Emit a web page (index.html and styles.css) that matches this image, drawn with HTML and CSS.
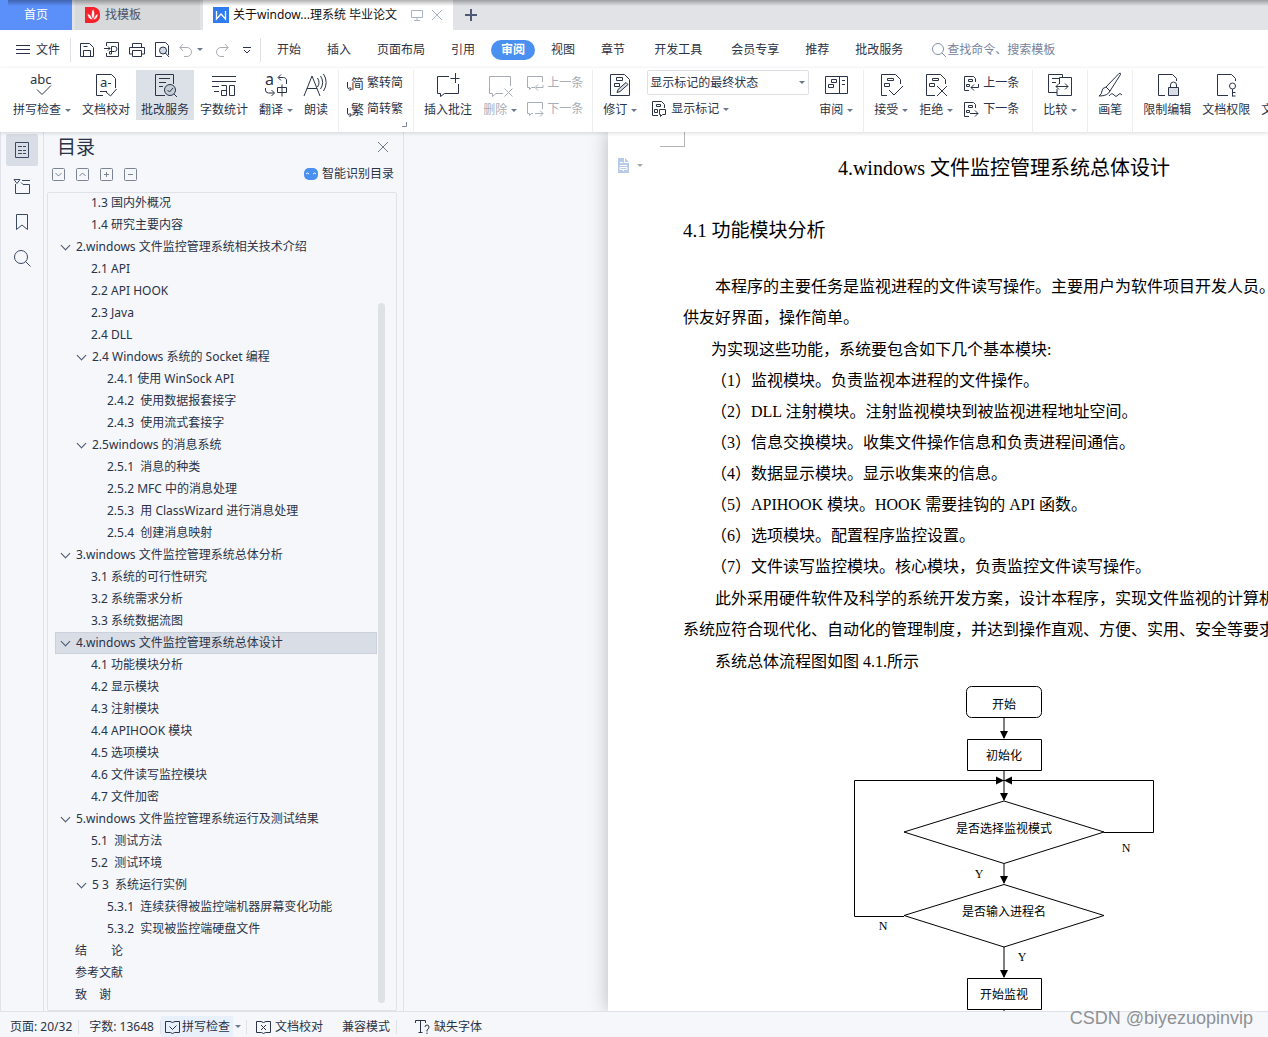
FILE: index.html
```html
<!DOCTYPE html>
<html lang="zh-CN">
<head>
<meta charset="utf-8">
<title>关于windows文件监控管理系统 毕业论文</title>
<link rel="stylesheet" href="styles.css">
</head>
<body>
<div class="app">
  <header class="tabs">
    <button class="tab tab-home">首页</button>
    <button class="tab tab-template">
      <svg class="logo" width="16" height="16" viewBox="0 0 16 16"><path d="M0 0h9a7 7 0 0 1 6 8a7 7 0 0 1-7 8H0z" fill="#f5222d"/><path d="M8 2c2 3 2 6 0 11c-2-4-2-8 0-11zM7.500 13C4 12 2.500 10 2.500 6.500C5 7.500 7 9.500 7.500 13zM8.500 13c.5-3.500 2-5 4.500-6c0 3-1.500 5-4.500 6z" fill="#fff" stroke="#f5222d" stroke-width=".5"/></svg>
      找模板
    </button>
    <div class="tab tab-doc">
      <svg class="logo" width="16" height="16" viewBox="0 0 16 16"><path d="M0 0h16v16H0z" fill="#2f7bf0"/><path d="M3.500 4v8l4.500-5l4.500 5V4" fill="none" stroke="#fff" stroke-width="1.300"/></svg>
      <span class="tab-title">关于window...理系统 毕业论文</span>
      <svg class="muted" width="12" height="12" viewBox="0 0 12 12"><path d="M.5 1.500h11v7H.5zM6 8.500v3M3 11.500h6"/></svg>
      <button class="icon-button muted" aria-label="关闭标签"><svg width="12" height="12" viewBox="0 0 12 12"><path d="M1 1l10 10M11 1L1 11"/></svg></button>
    </div>
    <button class="tab-add" aria-label="新建标签"><svg width="12" height="12" viewBox="0 0 12 12"><path d="M6 0v12M0 6h12" stroke-width="2"/></svg></button>
  </header>

  <nav class="menu">
    <button class="file-menu"><svg width="14" height="12" viewBox="0 0 14 12"><path d="M0 1.500h14M0 5.500h14M0 9.500h14"/></svg>文件</button>
    <span class="menu-rule"></span>
    <div class="quick">
      <button class="icon-button" aria-label="保存"><svg width="16" height="16" viewBox="0 0 16 16"><path d="M1.500 14.500v-13h9l4 4v9zM4.500 14.500v-6h7v6M4.500 4.500h4"/></svg></button>
      <button class="icon-button" aria-label="输出PDF"><svg width="16" height="16" viewBox="0 0 16 16"><path d="M2.500 4V.5h12v14h-12V11M0 6.500h6M4 4.500l2 2l-2 2M7.500 12V4.500h3a2 2 0 0 1 0 5H5.500v2.500h2"/></svg></button>
      <button class="icon-button" aria-label="打印"><svg width="16" height="16" viewBox="0 0 16 16"><path d="M3.500 5V1.500h9V5M3.500 12h-3V5.500h15V12h-3M3.500 8.500h9v6h-9z"/></svg></button>
      <button class="icon-button" aria-label="打印预览"><svg width="16" height="16" viewBox="0 0 16 16"><path d="M8 14.500H1.500V.5h10l3 3V13"/><circle cx="9" cy="8.500" r="3.500" fill="#d5dae2"/><path d="M11.500 11l3.500 4"/></svg></button>
      <button class="icon-button faded undo" aria-label="撤销"><svg width="14" height="14" viewBox="0 0 14 14"><path d="M4 1L1 4.500L4 8M1 4.500h7a4 4 0 0 1 0 9H5"/></svg><i class="caret"></i></button>
      <button class="icon-button faded redo" aria-label="恢复"><svg width="14" height="14" viewBox="0 0 14 14"><path d="M10 1l3 3.500L10 8M13 4.500H6a4 4 0 0 0 0 9h3"/></svg></button>
      <button class="icon-button more" aria-label="更多"><svg width="8" height="8" viewBox="0 0 8 8"><path d="M0 1.500h8M1 4l3 3l3-3"/></svg></button>
    </div>
    <span class="menu-rule"></span>
    <div class="menu-items">
      <button>开始</button><button>插入</button><button>页面布局</button><button>引用</button><button class="current">审阅</button><button>视图</button><button>章节</button><button class="wide">开发工具</button><button>会员专享</button><button>推荐</button><button>批改服务</button>
    </div>
    <label class="search"><svg width="16" height="16" viewBox="0 0 16 16"><circle cx="7" cy="7" r="5.500"/><path d="M11 11l4 4"/></svg><input type="text" placeholder="查找命令、搜索模板" aria-label="查找命令"></label>
  </nav>

  <div class="ribbon">
    <button class="tool"><svg width="24" height="26" viewBox="0 0 24 26"><text x="0" y="12" class="glyph-abc">abc</text><path d="M7 17.500l5 5l9-9"/></svg><span>拼写检查<i class="caret"></i></span></button>
    <button class="tool"><svg width="24" height="26" viewBox="0 0 24 26"><path d="M9 23.500H2.500v-21h15l4 4V16M6 19.500h7M12 20l4.500 4l6-7M14 11.500h3"/><text x="6" y="15" class="glyph-a">a</text></svg><span>文档校对</span></button>
    <button class="tool active"><svg width="24" height="26" viewBox="0 0 24 26"><path d="M12 23.500H2.500v-21h18V12M6 6.500h11M6 10.500h7M6 14.500h4"/><circle cx="17" cy="18" r="5.500" fill="#c6cdd5"/><path d="M14.500 18l2 2l3.500-4M21 22l3 3"/></svg><span>批改服务</span></button>
    <button class="tool"><svg width="24" height="26" viewBox="0 0 24 26"><path d="M0 4.500h24M0 9.500h24M0 14.500h7M2 19.500h5M9.500 13.500h5v10h-5v-5h5M17.500 13.500h5v10h-5z"/></svg><span>字数统计</span></button>
    <button class="tool"><svg width="24" height="26" viewBox="0 0 24 26"><text x="1" y="13" class="glyph-big">a</text><path d="M22.500 12V9a3 3 0 0 0-3-3.500h-5M17 2.500l-3 3l3 3M1.500 16v2a3 3 0 0 0 3 3H10M7.500 18l3 3l-3 3M13.500 15.500h9v5h-9zM18 12.500v12"/></svg><span>翻译<i class="caret"></i></span></button>
    <button class="tool"><svg width="24" height="26" viewBox="0 0 24 26"><path d="M0 24L8 4l8 20M3 16.500h10M13.500 6a8 8 0 0 1 0 9M16.500 4a11 11 0 0 1 0 13M19.500 2a15 15 0 0 1 0 17"/></svg><span>朗读</span></button>
    <span class="rule"></span>
    <div class="stack convert">
      <button><svg width="16" height="18" viewBox="0 0 16 18"><text x="4" y="14" class="glyph-cjk">简</text><path d="M.5 8v5a2 2 0 0 0 2 2H4M2.500 13l2 2l-2 2"/></svg>繁转简</button>
      <button><svg width="16" height="18" viewBox="0 0 16 18"><text x="4" y="14" class="glyph-cjk">繁</text><path d="M.5 8v5a2 2 0 0 0 2 2H4M2.500 13l2 2l-2 2"/></svg>简转繁</button>
      <svg class="launcher" width="6" height="6" viewBox="0 0 6 6"><path d="M4.500 0v4.500H0"/></svg>
    </div>
    <span class="rule"></span>
    <button class="tool"><svg width="24" height="26" viewBox="0 0 24 26"><path d="M13 4.500H1.500v17h3v3l4-3h14V12M19.500 1v10M14.500 6.500h9"/></svg><span>插入批注</span></button>
    <button class="tool faded"><svg width="24" height="26" viewBox="0 0 24 26"><path d="M15 21.500H8l-3.500 3v-3h-3v-17h21V14M16.500 16.500l8 8M24.500 16.500l-8 8"/></svg><span>删除<i class="caret"></i></span></button>
    <div class="stack comments faded">
      <button><svg width="16" height="18" viewBox="0 0 16 18"><path d="M8 13.500H4.500l-2 2v-2h-2v-11h15V8M16 11v2.500H9M11 10.500l-3 3l3 3"/></svg>上一条</button>
      <button><svg width="16" height="18" viewBox="0 0 16 18"><path d="M6 13.500H4.500l-2 2v-2h-2v-11h15V9M8 13.500h8M13 10.500l3 3l-3 3"/></svg>下一条</button>
    </div>
    <span class="rule"></span>
    <button class="tool"><svg width="24" height="26" viewBox="0 0 24 26"><path d="M2.500 23.500v-21h14l5 5v16zM8.500 5.500h6v3h-6zM6.500 11.500h5v3h-5z"/><path d="M9 20.500l1-3l8-7l2 2l-8 7z" fill="#d9dde4"/></svg><span>修订<i class="caret"></i></span></button>
    <div class="stack markup">
      <div class="select-box"><select aria-label="显示状态"><option>显示标记的最终状态</option></select><i class="caret"></i></div>
      <button class="markup-show"><svg width="16" height="18" viewBox="0 0 16 18"><path d="M7 15.500H1.500v-14h9l3 3V8M5.500 4.500h4v2h-4zM3.500 9.500h3v3h-3zM8.500 9.500h6v5h-3l-2 2v-2h-1z"/></svg>显示标记<i class="caret"></i></button>
    </div>
    <button class="tool"><svg width="24" height="26" viewBox="0 0 24 26"><path d="M1.500 4.500h22v17h-22zM15.500 4.500v17M7.500 7.500h5v3h-5zM4.500 12.500h5v3h-5zM18 8.500h3M18 12.500h3"/></svg><span>审阅<i class="caret"></i></span></button>
    <span class="rule"></span>
    <button class="tool"><svg width="24" height="26" viewBox="0 0 24 26"><path d="M8 23.500H2.500v-21h14l5 5V12M8.500 6.500h6v2h-6zM5.500 11.500h5v3h-5zM10 18l5 5l9-9"/></svg><span>接受<i class="caret"></i></span></button>
    <button class="tool"><svg width="24" height="26" viewBox="0 0 24 26"><path d="M11 23.500H2.500v-21h14l5 5V12M8.500 6.500h6v2h-6zM5.500 11.500h5v3h-5zM13 14l10 10M23 14L13 24"/></svg><span>拒绝<i class="caret"></i></span></button>
    <div class="stack changes">
      <button><svg width="16" height="18" viewBox="0 0 16 18"><path d="M6 16.500H1.500v-14h9l2 2V8M5.500 5.500h4v2h-4zM3.500 10.500h3v2h-3zM15.500 10v3.500H8M11 10.500l-3 3l3 3"/></svg>上一条</button>
      <button><svg width="16" height="18" viewBox="0 0 16 18"><path d="M6 16.500H1.500v-14h9l2 2V8M5.500 5.500h4v2h-4zM3.500 10.500h3v2h-3zM7 13.500h8M12 10.500l3 3l-3 3"/></svg>下一条</button>
    </div>
    <span class="rule"></span>
    <button class="tool"><svg width="24" height="26" viewBox="0 0 24 26"><path d="M9 20.500H.5v-18h14V5M9 17v6.500h14.500v-18H11.500V12M4 6.500h7M4 10.500h4M8 14.500h12M11 11.500l-3 3l3 3M17 11.500l3 3l-3 3"/></svg><span>比较<i class="caret"></i></span></button>
    <span class="rule"></span>
    <button class="tool"><svg width="24" height="26" viewBox="0 0 24 26"><path d="M8 15L21 1.500q2-1 1.500 1L12 19M8 15l4 4q-2 5-11 5q3-2 3-5t4-4M11 24q3-4 5-1t4 0t4 0"/></svg><span>画笔</span></button>
    <span class="rule"></span>
    <button class="tool"><svg width="24" height="26" viewBox="0 0 24 26"><path d="M10 23.500H3.500v-21h14l4 4V9"/><path d="M13.500 15.500h10v8h-10z" fill="#d9dde4"/><path d="M15.500 15v-2a3 3 0 0 1 6 0v2"/></svg><span>限制编辑</span></button>
    <button class="tool"><svg width="24" height="26" viewBox="0 0 24 26"><path d="M14 23.500H3.500v-21h14l4 4V9"/><circle cx="18.500" cy="14" r="3"/><path d="M18.500 17v7.500M18.500 20.500h3M18.500 24h3"/></svg><span>文档权限</span></button>
    <button class="tool"><svg width="24" height="26" viewBox="0 0 24 26"></svg><span>文档认证</span></button>
  </div>

  <main class="workspace">
    <nav class="rail">
      <button class="active" aria-label="目录"><svg width="16" height="18" viewBox="0 0 16 18"><path d="M1.500 1.500h13v15h-13zM4 5.500h4M9 5.500h3M4 9.500h4M9 9.500h3M4 12.500h4M9 12.500h3"/></svg></button>
      <button aria-label="章节"><svg width="16" height="18" viewBox="0 0 16 18"><path d="M0 2.500h6L3 6.500zM8 3.500h8M1.500 7v9.500h14v-9H9l-2 -2"/></svg></button>
      <button aria-label="书签"><svg width="16" height="18" viewBox="0 0 16 18"><path d="M2.500 1.500h11v15L8 12l-5.500 4.500z"/></svg></button>
      <button aria-label="查找"><svg width="16" height="18" viewBox="0 0 16 18"><circle cx="7" cy="8" r="6.500"/><path d="M11.500 12.500l5 5"/></svg></button>
    </nav>

    <aside class="outline">
      <div class="outline-head"><h2>目录</h2><button class="icon-button" aria-label="关闭目录"><svg width="10" height="10" viewBox="0 0 10 10"><path d="M0 0l10 10M10 0L0 10"/></svg></button></div>
      <div class="outline-tools">
        <button class="icon-button" aria-label="展开"><svg width="13" height="13" viewBox="0 0 13 13"><rect x=".5" y=".5" width="12" height="12" rx="1"/><path d="M3.500 5l3 3l3-3"/></svg></button>
        <button class="icon-button" aria-label="收起"><svg width="13" height="13" viewBox="0 0 13 13"><rect x=".5" y=".5" width="12" height="12" rx="1"/><path d="M3.500 8l3-3l3 3"/></svg></button>
        <button class="icon-button" aria-label="增加"><svg width="13" height="13" viewBox="0 0 13 13"><rect x=".5" y=".5" width="12" height="12" rx="1"/><path d="M4 6.500h5M6.500 4v5"/></svg></button>
        <button class="icon-button" aria-label="减少"><svg width="13" height="13" viewBox="0 0 13 13"><rect x=".5" y=".5" width="12" height="12" rx="1"/><path d="M4 6.500h5"/></svg></button>
        <button class="smart"><svg class="logo" width="14" height="12" viewBox="0 0 14 12"><rect width="14" height="12" rx="5" fill="#4a90f0"/><path d="M2 6q1.500-2 3 0M9 6q1.500-2 3 0" stroke="#fff"/></svg>智能识别目录</button>
      </div>
      <div class="tree">
        <ul>
          <li class="l2"><a href="#">1.3 国内外概况</a></li>
          <li class="l2"><a href="#">1.4 研究主要内容</a></li>
          <li class="open"><a href="#">2.windows 文件监控管理系统相关技术介绍</a></li>
          <li class="l2"><a href="#">2.1 API</a></li>
          <li class="l2"><a href="#">2.2 API HOOK</a></li>
          <li class="l2"><a href="#">2.3 Java</a></li>
          <li class="l2"><a href="#">2.4 DLL</a></li>
          <li class="l2 open"><a href="#">2.4 Windows 系统的 Socket 编程</a></li>
          <li class="l3"><a href="#">2.4.1 使用 WinSock API</a></li>
          <li class="l3"><a href="#">2.4.2&nbsp; 使用数据报套接字</a></li>
          <li class="l3"><a href="#">2.4.3&nbsp; 使用流式套接字</a></li>
          <li class="l2 open"><a href="#">2.5windows 的消息系统</a></li>
          <li class="l3"><a href="#">2.5.1&nbsp; 消息的种类</a></li>
          <li class="l3"><a href="#">2.5.2 MFC 中的消息处理</a></li>
          <li class="l3"><a href="#">2.5.3&nbsp; 用 ClassWizard 进行消息处理</a></li>
          <li class="l3"><a href="#">2.5.4&nbsp; 创建消息映射</a></li>
          <li class="open"><a href="#">3.windows 文件监控管理系统总体分析</a></li>
          <li class="l2"><a href="#">3.1 系统的可行性研究</a></li>
          <li class="l2"><a href="#">3.2 系统需求分析</a></li>
          <li class="l2"><a href="#">3.3 系统数据流图</a></li>
          <li class="open selected"><a href="#">4.windows 文件监控管理系统总体设计</a></li>
          <li class="l2"><a href="#">4.1 功能模块分析</a></li>
          <li class="l2"><a href="#">4.2 显示模块</a></li>
          <li class="l2"><a href="#">4.3 注射模块</a></li>
          <li class="l2"><a href="#">4.4 APIHOOK 模块</a></li>
          <li class="l2"><a href="#">4.5 选项模块</a></li>
          <li class="l2"><a href="#">4.6 文件读写监控模块</a></li>
          <li class="l2"><a href="#">4.7 文件加密</a></li>
          <li class="open"><a href="#">5.windows 文件监控管理系统运行及测试结果</a></li>
          <li class="l2"><a href="#">5.1&nbsp; 测试方法</a></li>
          <li class="l2"><a href="#">5.2&nbsp; 测试环境</a></li>
          <li class="l2 open"><a href="#">5 3&nbsp; 系统运行实例</a></li>
          <li class="l3"><a href="#">5.3.1&nbsp; 连续获得被监控端机器屏幕变化功能</a></li>
          <li class="l3"><a href="#">5.3.2&nbsp; 实现被监控端硬盘文件</a></li>
          <li><a href="#">结　　论</a></li>
          <li><a href="#">参考文献</a></li>
          <li><a href="#">致　谢</a></li>
        </ul>
        <div class="scroll-track"><div class="scroll-thumb"></div></div>
      </div>
    </aside>

    <section class="canvas">
      <article class="page">
        <span class="crop-mark"></span>
        <button class="para-mark" aria-label="段落"><svg width="11" height="15" viewBox="0 0 11 15"><path d="M0 0h7l4 4v11H0z" fill="#b8cbea" stroke="none"/><path d="M6.500 0v4.500H11M2 4.500h3M2 7.500h7M2 9.500h7v2H2zM5.500 11v2" stroke="#fff"/></svg><i class="caret"></i></button>
        <h1>4.windows 文件监控管理系统总体设计</h1>
        <h2>4.1 功能模块分析</h2>
        <p class="gap-after">本程序的主要任务是监视进程的文件读写操作。主要用户为软件项目开发人员。<br>供友好界面，操作简单。</p>
        <p class="lead">为实现这些功能，系统要包含如下几个基本模块:</p>
        <ul class="modules">
          <li>（1）监视模块。负责监视本进程的文件操作。</li>
          <li>（2）DLL 注射模块。注射监视模块到被监视进程地址空间。</li>
          <li>（3）信息交换模块。收集文件操作信息和负责进程间通信。</li>
          <li>（4）数据显示模块。显示收集来的信息。</li>
          <li>（5）APIHOOK 模块。HOOK 需要挂钩的 API 函数。</li>
          <li>（6）选项模块。配置程序监控设置。</li>
          <li>（7）文件读写监控模块。核心模块，负责监控文件读写操作。</li>
        </ul>
        <p class="gap-after">此外采用硬件软件及科学的系统开发方案，设计本程序，实现文件监视的计算机<br>系统应符合现代化、自动化的管理制度，并达到操作直观、方便、实用、安全等要求</p>
        <p>系统总体流程图如图 4.1.所示</p>
        <svg class="flowchart" width="308" height="334" viewBox="0 0 308 334">
          <g class="lines">
            <rect x="116.500" y="9.500" width="75" height="31" rx="5"/>
            <path d="M117.500 62.500h74v31h-74zM117.500 301.500h74v31h-74z"/>
            <path d="M154 124l100 31l-100 31.500l-100-31.500zM154 207.500l100 31l-100 31.500l-100-31.500z"/>
            <path d="M154 41v20M154 94v29M154 187v19M154 270v30M154 333v2"/>
            <path d="M254 155.500h49.500v-52H4.500v136H54"/>
          </g>
          <path d="M150 54h8l-4 8zM150 116h8l-4 8zM150 199h8l-4 8zM150 293h8l-4 8zM146 99.500v8l8-4zM162 99.500v8l-8-4z"/>
          <g class="labels">
            <text x="154" y="32">开始</text><text x="154" y="83">初始化</text><text x="154" y="156">是否选择监视模式</text><text x="154" y="239">是否输入进程名</text><text x="154" y="322">开始监视</text>
            <text x="276" y="175">N</text><text x="129" y="201">Y</text><text x="33" y="253">N</text><text x="172" y="284">Y</text>
          </g>
        </svg>
      </article>
    </section>
  </main>

  <footer class="status">
    <span class="cell">页面: 20/32</span>
    <span class="cell">字数: 13648</span>
    <button class="spell"><svg width="15" height="14" viewBox="0 0 15 14"><path d="M5 1.500H.5v11h5l2 1l2-1h5v-11H10l-2.500 1zM4.500 6.500l3 3l4-4"/></svg>拼写检查</button>
    <button class="spell-more" aria-label="拼写选项"><i class="caret"></i></button>
    <button class="proof"><svg width="15" height="14" viewBox="0 0 15 14"><path d="M5 1.500H.5v11h5l2 1l2-1h5v-11H10l-2.500 1zM5 5l5 5M10 5l-5 5"/></svg>文档校对</button>
    <span class="cell compat">兼容模式</span>
    <button class="missing"><svg width="15" height="14" viewBox="0 0 15 14"><path d="M.5 3V.5h10V3M5.500 .5v12M3.500 12.500h4M10 7q0-2 2-2t2 2t-2 3v1.500M12 12.500v1.500"/></svg>缺失字体</button>
  </footer>
  <div class="watermark">CSDN @biyezuopinvip</div>
</div>
</body>
</html>
```
FILE: styles.css
```css
* { box-sizing: border-box; }
body {
  margin: 0;
  background: #f5f7fa;
  color: #2a3348;
  font: 12px/16px "Noto Sans", "Noto Sans CJK SC", sans-serif;
}
button, input, select {
  margin: 0;
  padding: 0;
  border: 0;
  background: none;
  color: inherit;
  font: inherit;
  white-space: nowrap;
}
ul { margin: 0; padding: 0; list-style: none; }
svg { flex: none; fill: none; stroke: currentColor; overflow: visible; }
svg text { fill: currentColor; stroke: none; }
.logo { stroke: none; }
.app {
  position: relative;
  display: flex;
  flex-direction: column;
  height: 100vh;
  overflow: hidden;
}
.icon-button { display: flex; align-items: center; }
.caret {
  flex: none;
  width: 6px;
  border: 3px solid transparent;
  border-top-color: #6d7890;
  border-bottom: 0;
}
.faded { color: #a9adb5; }
.muted { color: #a9b3c8; }

/* document tabs */
.tabs {
  position: relative;
  flex: none;
  display: flex;
  gap: 3px;
  height: 30px;
  background: #e2e3e7;
}
.tabs::after {
  content: "";
  position: absolute;
  inset: 0 0 auto 8px;
  height: 6px;
  background: linear-gradient(#0000004d, #00000000);
}
.tab { display: flex; align-items: center; }
.tab-home { width: 72px; justify-content: center; background: #5b8ff9; color: #fff; }
.tab-template { width: 125px; padding-left: 10px; gap: 4px; background: #d8d9db; color: #4a5468; }
.tab-doc { width: 250px; padding-left: 10px; background: #fff; color: #111; }
.tab-title { width: 168px; margin: 0 10px 0 4px; white-space: nowrap; }
.tab-doc .icon-button { margin-left: 8px; }
.tab-add { display: flex; align-items: center; padding: 0 9px; color: #4c5a78; }

/* menu */
.menu { flex: none; display: flex; align-items: center; height: 38px; padding-top: 1px; background: #fff; }
.file-menu { display: flex; align-items: center; gap: 6px; padding: 0 10px 0 16px; }
.menu-rule { width: 1px; height: 24px; background: #dfe1e6; }
.quick { display: flex; align-items: center; gap: 9px; padding: 0 9px 0 8px; }
.quick .undo { gap: 4px; }
.quick .redo { margin-left: 3px; }
.quick .more { margin-left: 5px; }
.menu-items { display: flex; align-items: center; gap: 26px; padding: 0 28px 0 16px; }
.menu-items .wide { margin: 0 3px; }
.menu-items .current {
  margin: 0 -10px;
  padding: 2px 10px;
  border-radius: 10px;
  background: #4a90f0;
  color: #fff;
  font-weight: 700;
}
.search { display: flex; align-items: center; color: #8490a8; }
.search input { width: 160px; outline: 0; }
.search input::placeholder { color: #77839c; opacity: 1; }

/* ribbon */
.ribbon {
  position: relative;
  z-index: 1;
  flex: none;
  display: flex;
  gap: 1px;
  height: 64px;
  padding: 2px 0 0 8px;
  background: #fff;
  box-shadow: 0 1px 4px #00000026;
  overflow: hidden;
}
.tool {
  flex: none;
  display: flex;
  flex-direction: column;
  align-items: center;
  gap: 4px;
  height: 50px;
  padding: 2px 5px;
}
.tool span { display: flex; align-items: center; gap: 4px; }
.tool.active { background: #dce1e7; }
.rule { flex: none; width: 1px; height: 62px; margin: 0 4px; background: #eceef1; }
.stack { position: relative; flex: none; display: flex; flex-direction: column; gap: 8px; height: 62px; padding: 4px 5px; }
.stack button { display: flex; align-items: center; gap: 4px; height: 18px; }
.convert { padding: 4px 5px 4px 3px; }
.comments { padding: 4px; }
.changes { padding: 4px 8px 4px 4px; }
.launcher { position: absolute; right: 0; bottom: 4px; color: #7d879b; }
.markup { gap: 5px; padding: 0 4px; }
.select-box { position: relative; display: flex; align-items: center; width: 162px; height: 25px; border: 1px solid #dcdfe4; border-radius: 2px; }
.select-box select { flex: 1; height: 23px; padding-left: 2px; appearance: none; }
.select-box .caret { position: absolute; right: 3px; }
.markup-show { padding-left: 4px; }
.glyph-abc { font-size: 13px; }
.glyph-a { font-size: 13px; }
.glyph-big { font-size: 16px; }
.glyph-cjk { font-size: 13px; }

/* workspace */
.workspace { flex: 1; display: flex; min-height: 0; }
.rail { flex: none; display: flex; flex-direction: column; gap: 4px; width: 44px; padding: 2px 5px; border: solid #dfe2e9; border-width: 0 1px; color: #3b4863; }
.rail button { display: grid; place-items: center; height: 32px; border-radius: 2px; }
.rail .active { background: #d9dde5; }
.outline { flex: none; display: flex; flex-direction: column; width: 360px; padding: 0 6px 0 3px; border-right: 1px solid #dfe2e9; }
.outline-head { display: flex; align-items: center; justify-content: space-between; height: 30px; padding: 0 9px 0 10px; }
.outline-head h2 { margin: 0; font-size: 19px; line-height: 30px; font-weight: 400; }
.outline-head svg { color: #6f7a90; }
.outline-tools { display: flex; align-items: center; gap: 11px; height: 24px; margin-bottom: 6px; padding: 0 3px 0 5px; color: #7b8493; }
.smart { display: flex; align-items: center; gap: 4px; margin-left: auto; color: #2a3348; }
.tree { flex: 1; display: flex; min-height: 0; border: 1px solid #dfe2e9; border-radius: 2px; overflow: hidden; }
.tree ul { flex: 1; margin: -1px 0 0 7px; }
.tree li { display: flex; align-items: center; height: 22px; padding-left: 20px; white-space: nowrap; }
.tree a { color: inherit; text-decoration: none; }
.tree .l2 { padding-left: 36px; }
.tree .l3 { padding-left: 52px; }
.tree .open::before {
  content: "";
  width: 6px;
  height: 6px;
  margin: -4px 7px 0 -13px;
  border: solid #4a556c;
  border-width: 0 1px 1px 0;
  rotate: 45deg;
}
.tree .selected { background: #d9dde5; outline: 1px solid #cbd1da; outline-offset: -1px; }
.scroll-track { flex: none; width: 7px; margin: 110px 11px 7px 1px; }
.scroll-thumb { height: 100%; border-radius: 4px; background: #dfe2e5; }

/* document */
.canvas { flex: 1; display: flex; min-width: 0; padding-left: 204px; overflow: hidden; }
.page {
  position: relative;
  flex: none;
  width: 792px;
  padding: 21px 75px 0;
  background: #fff;
  box-shadow: 0 0 18px #00000040;
  color: #000;
  font: 16px/31px "Liberation Serif", "Noto Sans CJK SC", serif;
  white-space: nowrap;
}
.page h1, .page h2 { margin: 0; font-weight: 400; line-height: 30px; }
.page h1 { font-size: 20px; text-align: center; }
.page h2 { margin: 33px 0 25px; font-size: 19px; }
.page p { margin: 0; text-indent: 32px; }
.page .gap-after, .modules { margin-bottom: 1px; }
.page .lead, .modules { text-indent: 28px; }
.crop-mark { position: absolute; top: 0; left: 52px; width: 25px; height: 15px; border: solid #b5b5b5; border-width: 0 1px 1px 0; }
.para-mark { position: absolute; top: 26px; left: 10px; display: flex; align-items: center; gap: 8px; }
.para-mark .caret { border-top-color: #a5a9b0; }
.flowchart { display: block; margin: 0 auto; fill: #000; stroke: none; }
.flowchart .lines { fill: none; stroke: #000; }
.labels { font-size: 12px; text-anchor: middle; }

/* status bar */
.status { flex: none; display: flex; align-items: center; height: 26px; padding: 4px 0 0 10px; border-top: 1px solid #dfe2e9; }
.status .cell { margin-right: 10px; padding-right: 6px; border-right: 1px solid #dfe2e9; line-height: 14px; }
.status button { display: flex; align-items: center; gap: 4px; }
.status .spell { gap: 2px; height: 22px; margin-left: -10px; padding: 0 3px 0 4px; background: #e8f0fb; }
.status .spell-more { height: 14px; margin-right: 9px; padding: 0 5px 0 2px; border-right: 1px solid #dfe2e9; }
.status .compat { margin: 0 18px 0 19px; }
.watermark {
  position: absolute;
  right: 15px;
  bottom: 8px;
  color: #8f9194;
  font: 18px/22px "Liberation Sans", sans-serif;
}
```
